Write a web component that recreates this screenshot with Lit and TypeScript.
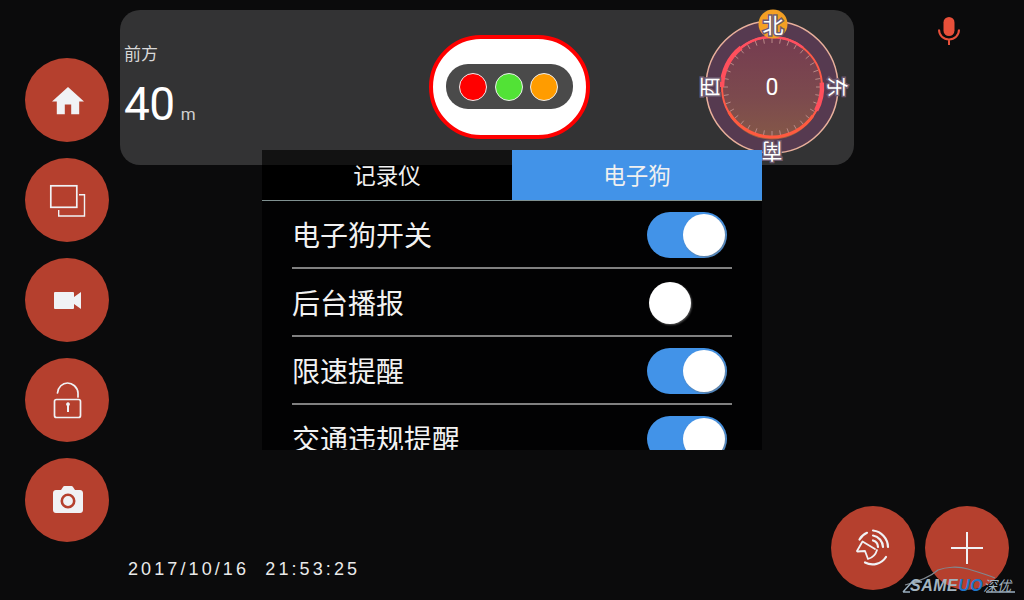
import { LitElement, css, html, svg } from "lit";
import { customElement, state } from "lit/decorators.js";

const icons = {
  home: svg`<path d="M10 20v-6h4v6h5v-8h3L12 3 2 12h3v8z" transform="translate(5.8 6.200) scale(1.6)" fill="#f0f2f5"/>`,
  windows: svg`<g fill="none" stroke="#f0f2f5"><rect x="7.800" y="9.800" width="26" height="21.500" stroke-width="1.700"/><path d="M36 18.700h5.500V40H15.700v-6" stroke-width="1.400"/></g>`,
  video: svg`<path d="M12 16h18a1 1 0 0 1 1 1v4l7-5v17l-7-5v4a1 1 0 0 1-1 1H12a1 1 0 0 1-1-1V17a1 1 0 0 1 1-1z" fill="#f0f2f5"/>`,
  lock: svg`<g fill="none" stroke="#f0f2f5" stroke-width="1.700" stroke-linecap="round"><rect x="11.500" y="23.500" width="26" height="18" rx="2"/><path d="M14.500 17C15 11 19.500 7 24.500 7S34.500 11 35 17V21"/></g><path d="M23.300 29a1.900 1.900 0 1 1 3.400 0l-.7 1V36h-2v-6z" fill="#f0f2f5"/>`,
  camera: svg`<path d="M13 14h5l2-3c.4-.6.8-1 1.500-1h7c.7 0 1.100.4 1.500 1l2 3h5c1.700 0 3 1.300 3 3v17c0 1.700-1.300 3-3 3H13c-1.700 0-3-1.300-3-3V17c0-1.700 1.300-3 3-3z" fill="#f0f2f5"/><circle cx="25" cy="25" r="6.200" fill="#f0f2f5" stroke="#b5402e" stroke-width="2.600"/>`,
};

const ticks = Array.from({ length: 36 }, (_, i) => (i * 10 * Math.PI) / 180);

const arc = (r: number, from: number, to: number) => {
  const pt = (a: number) => {
    const t = (a * Math.PI) / 180;
    return `${80 + r * Math.sin(t)} ${77 - r * Math.cos(t)}`;
  };
  return `M${pt(from)}A${r} ${r} 0 ${Math.abs(to - from) > 180 ? 1 : 0} 1 ${pt(to)}`;
};

@customElement("app-root")
export class AppRoot extends LitElement {
  @state() tab = 1;

  @state() rows = [
    { label: "电子狗开关", on: true },
    { label: "后台播报", on: false },
    { label: "限速提醒", on: true },
    { label: "交通违规提醒", on: true },
  ];

  toggle(index: number) {
    this.rows = this.rows.map((row, i) => (i === index ? { ...row, on: !row.on } : row));
  }

  renderCompass() {
    return html`<svg class="compass" width="160" height="155" viewBox="0 0 160 155">
      <defs>
        <linearGradient id="dial" x1="0" y1="0" x2="0" y2="1">
          <stop offset="0" stop-color="#753c50"/>
          <stop offset="0.6" stop-color="#7c4a4e"/>
          <stop offset="1" stop-color="#845748"/>
        </linearGradient>
      </defs>
      <circle cx="80" cy="77" r="66" fill="#563a50" stroke="#e9b09c" stroke-width="1.500"/>
      <circle cx="80" cy="80" r="49.500" fill="#a5603f"/>
      <circle cx="80" cy="77" r="49.500" fill="url(#dial)"/>
      ${ticks.map(
        (t) => svg`<line x1=${80 + 44 * Math.sin(t)} y1=${77 - 44 * Math.cos(t)}
          x2=${80 + 49 * Math.sin(t)} y2=${77 - 49 * Math.cos(t)} stroke="#b98a88" stroke-width="1"/>`,
      )}
      <circle cx="80" cy="77" r="50" fill="none" stroke="#ff5a48" stroke-width="2"/>
      <path d=${arc(50, -38, 38)} fill="none" stroke="#ff4f60" stroke-width="2.500"/>
      <path d=${arc(50, -90, -38)} fill="none" stroke="#ff4f5c" stroke-width="4.500"/>
      <path d=${arc(50, 85, 118)} fill="none" stroke="#ff4f5c" stroke-width="4.500"/>
      <path d=${arc(50, 125, 240)} fill="none" stroke="#ff5a40" stroke-width="3"/>
      <circle cx="81" cy="14" r="14.500" fill="#f4a024"/>
      <text class="needle" x="80" y="85">0</text>
      <text class="dir" transform="translate(81 14)">北</text>
      <text class="dir" transform="translate(147 77) rotate(90)">东</text>
      <text class="dir" transform="translate(80 143) rotate(180)">南</text>
      <text class="dir" transform="translate(16 77) rotate(-90)">西</text>
    </svg>`;
  }

  renderDog() {
    return svg`<g transform="translate(14 14)" fill="none" stroke="#f0f2f5" stroke-width="2.200" stroke-linecap="round" stroke-linejoin="round">
      <path d="M14.500 19.500A16 16 0 0 1 22 12.800"/>
      <path d="M28 10.500A17 17 0 0 1 43 27"/>
      <path d="M28 15.500A12 12 0 0 1 38 27"/>
      <path d="M28 20.500A7 7 0 0 1 33 27"/>
      <path d="M20 42.500A16 16 0 0 0 41 37"/>
      <path d="M12 31L17.500 21.500L30 29" stroke-width="1.800"/>
      <path d="M12.500 31.500L20 31L23 39Q30 37 32 30" stroke-width="1.800"/>
    </g>`;
  }

  render() {
    return html`
      <nav class="rail">
        ${Object.values(icons).map(
          (icon) => html`<button class="fab"><svg width="48" height="48" viewBox="0 0 48 48">${icon}</svg></button>`,
        )}
      </nav>
      <main class="main">
        <div class="top">
          <section class="panel">
            <div class="distance">
              <div class="ahead">前方</div>
              <div class="value">40<span class="unit">m</span></div>
            </div>
            <div class="signal">
              <div class="lights">
                <i class="light red"></i><i class="light green"></i><i class="light amber"></i>
              </div>
            </div>
            ${this.renderCompass()}
          </section>
          <svg class="mic" width="24" height="30" viewBox="0 0 24 30">
            <rect x="6.500" y="1" width="11" height="19" rx="5.500" fill="#e8503a"/>
            <path d="M2 13.500c0 6 4.500 10 10 10s10-4 10-10M12 23.500V29" fill="none" stroke="#e8503a" stroke-width="2"/>
          </svg>
        </div>
        <section class="card">
          <div class="tabs">
            ${["记录仪", "电子狗"].map(
              (name, i) => html`<button class="tab ${this.tab === i ? "active" : ""}" @click=${() => (this.tab = i)}>${name}</button>`,
            )}
          </div>
          <div class="list">
            ${this.rows.map(
              (row, i) => html`<div class="row">
                <span>${row.label}</span>
                <button class="switch ${row.on ? "on" : ""}" @click=${() => this.toggle(i)}><i class="knob"></i></button>
              </div>`,
            )}
          </div>
        </section>
        <footer class="footer">
          <time class="clock">2017/10/16&nbsp;&nbsp;21:53:25</time>
          <div class="actions">
            <button class="fab"><svg width="84" height="84" viewBox="0 0 84 84">${this.renderDog()}</svg></button>
            <button class="fab"><svg width="32" height="32" viewBox="0 0 32 32"><path d="M16 0v32M0 16h32" stroke="#f0f2f5" stroke-width="2"/></svg></button>
          </div>
        </footer>
      </main>
      <div class="mark">
        <svg width="116" height="30" viewBox="0 0 116 30">
          <path d="M3 20C15 17 28 12 36 5C44 2 56 1 66 4C76 7 86 10 93 13" fill="none" stroke="#808890" stroke-width="1.200"/>
          <path d="M1 27L10 17H20M1 27H8M84 27H113" fill="none" stroke="#9aafbf" stroke-width="1.500"/>
        </svg>
        <span class="brand">SAME<b>UO</b><em>深优</em></span>
      </div>
    `;
  }

  static styles = css`
    :host {
      display: grid;
      grid-template-columns: 120px 904px;
      position: relative;
      width: 1024px;
      height: 600px;
      overflow: hidden;
      background: #0b0b0c;
      color: #fff;
      font-family: "Roboto", "Noto Sans CJK SC", sans-serif;
    }

    button {
      padding: 0;
      border: 0;
      background: none;
      color: inherit;
      font: inherit;
    }

    .rail {
      display: flex;
      flex-direction: column;
      gap: 16px;
      padding: 58px 0 0 25px;
    }

    .fab {
      display: flex;
      align-items: center;
      justify-content: center;
      flex: none;
      width: 84px;
      height: 84px;
      border-radius: 50%;
      background: #b5402e;
    }

    .main {
      display: flex;
      flex-direction: column;
      height: 600px;
      padding-top: 10px;
      box-sizing: border-box;
    }

    .top {
      display: flex;
      align-items: flex-start;
    }

    .panel {
      display: flex;
      align-items: center;
      box-sizing: border-box;
      width: 734px;
      height: 155px;
      padding: 0 2px 0 4px;
      border-radius: 20px;
      background: #333334;
    }

    .distance {
      align-self: flex-start;
      width: 305px;
      padding-top: 32px;
    }

    .ahead {
      font-size: 17px;
      line-height: 24px;
      color: #d8d8d8;
    }

    .value {
      margin-top: 10px;
      font-size: 46px;
      line-height: 56px;
      letter-spacing: -0.5px;
    }

    .unit {
      margin-left: 6px;
      font-size: 17px;
      letter-spacing: 0;
      color: #cfcfcf;
    }

    .signal {
      display: flex;
      align-items: center;
      justify-content: center;
      flex: none;
      box-sizing: border-box;
      width: 161px;
      height: 104px;
      margin-top: -2px;
      border: 4px solid #f00;
      border-radius: 52px;
      background: #fff;
    }

    .lights {
      display: flex;
      align-items: center;
      justify-content: center;
      gap: 7.500px;
      box-sizing: border-box;
      width: 127px;
      height: 45px;
      padding-right: 2px;
      border-radius: 22px;
      background: #4a4a4a;
    }

    .light {
      box-sizing: border-box;
      width: 28px;
      height: 28px;
      border: 1px solid #eee;
      border-radius: 50%;
    }

    .red {
      background: #f00;
    }

    .green {
      background: #52e236;
    }

    .amber {
      background: #ff9c00;
    }

    .compass {
      flex: none;
      margin-left: auto;
      overflow: visible;
    }

    .needle {
      font-size: 23px;
      fill: #fff;
      text-anchor: middle;
    }

    .dir {
      font-size: 21px;
      font-family: "Noto Sans CJK SC", sans-serif;
      fill: #fff;
      stroke: #6d5a70;
      stroke-width: 3px;
      paint-order: stroke;
      text-anchor: middle;
      dominant-baseline: central;
    }

    .mic {
      margin: 6px 0 0 83px;
    }

    .card {
      position: relative;
      flex: none;
      width: 500px;
      height: 300px;
      margin: -15px 0 0 142px;
      overflow: hidden;
      background: #020203;
    }

    .tabs {
      display: flex;
      height: 51px;
      box-sizing: border-box;
      border-bottom: 1px solid #7f9090;
    }

    .tab {
      flex: 1;
      padding-bottom: 3px;
      font-size: 22.500px;
      color: #f0f0f0;
      background: linear-gradient(#121212 15px, #000 15px);
      font-family: "Noto Sans CJK SC", sans-serif;
    }

    .tab.active {
      background: #4293e8;
    }

    .list {
      padding: 0 30px;
    }

    .row {
      display: flex;
      align-items: center;
      justify-content: space-between;
      box-sizing: border-box;
      height: 68px;
      padding-right: 5px;
      border-bottom: 2px solid #808080;
      font-size: 28px;
      font-family: "Noto Sans CJK SC", sans-serif;
      color: #f2f2f2;
    }

    .switch {
      display: flex;
      align-items: center;
      box-sizing: border-box;
      width: 80px;
      height: 46px;
      margin-top: 2px;
      padding: 0 2px;
      border-radius: 23px;
    }

    .switch.on {
      justify-content: flex-end;
      background: #4293e8;
    }

    .knob {
      width: 42px;
      height: 42px;
      border-radius: 50%;
      background: #fff;
      box-shadow: 1px 1px 2px rgba(120, 120, 120, 0.7);
    }

    .footer {
      display: flex;
      align-items: flex-end;
      justify-content: space-between;
      margin-top: auto;
      padding: 0 15px 10px 8px;
    }

    .clock {
      padding-bottom: 10px;
      font-family: "Liberation Sans", sans-serif;
      font-size: 18px;
      line-height: 22px;
      letter-spacing: 3.100px;
      color: #eaeaea;
    }

    .actions {
      display: flex;
      gap: 10px;
    }

    .mark {
      position: absolute;
      left: 902px;
      top: 565px;
      width: 116px;
      height: 30px;
    }

    .mark svg {
      position: absolute;
      inset: 0;
    }

    .brand {
      position: absolute;
      left: 8px;
      top: 11px;
      font-family: "Liberation Sans", sans-serif;
      font-size: 16px;
      line-height: 18px;
      font-style: italic;
      font-weight: 700;
      letter-spacing: 0.5px;
      color: #a3b4c0;
      white-space: nowrap;
    }

    .brand b {
      color: #1f76c8;
    }

    .brand em {
      font-family: "Noto Sans CJK SC", sans-serif;
      font-size: 14px;
      font-weight: 400;
      letter-spacing: 0;
    }
  `;
}
